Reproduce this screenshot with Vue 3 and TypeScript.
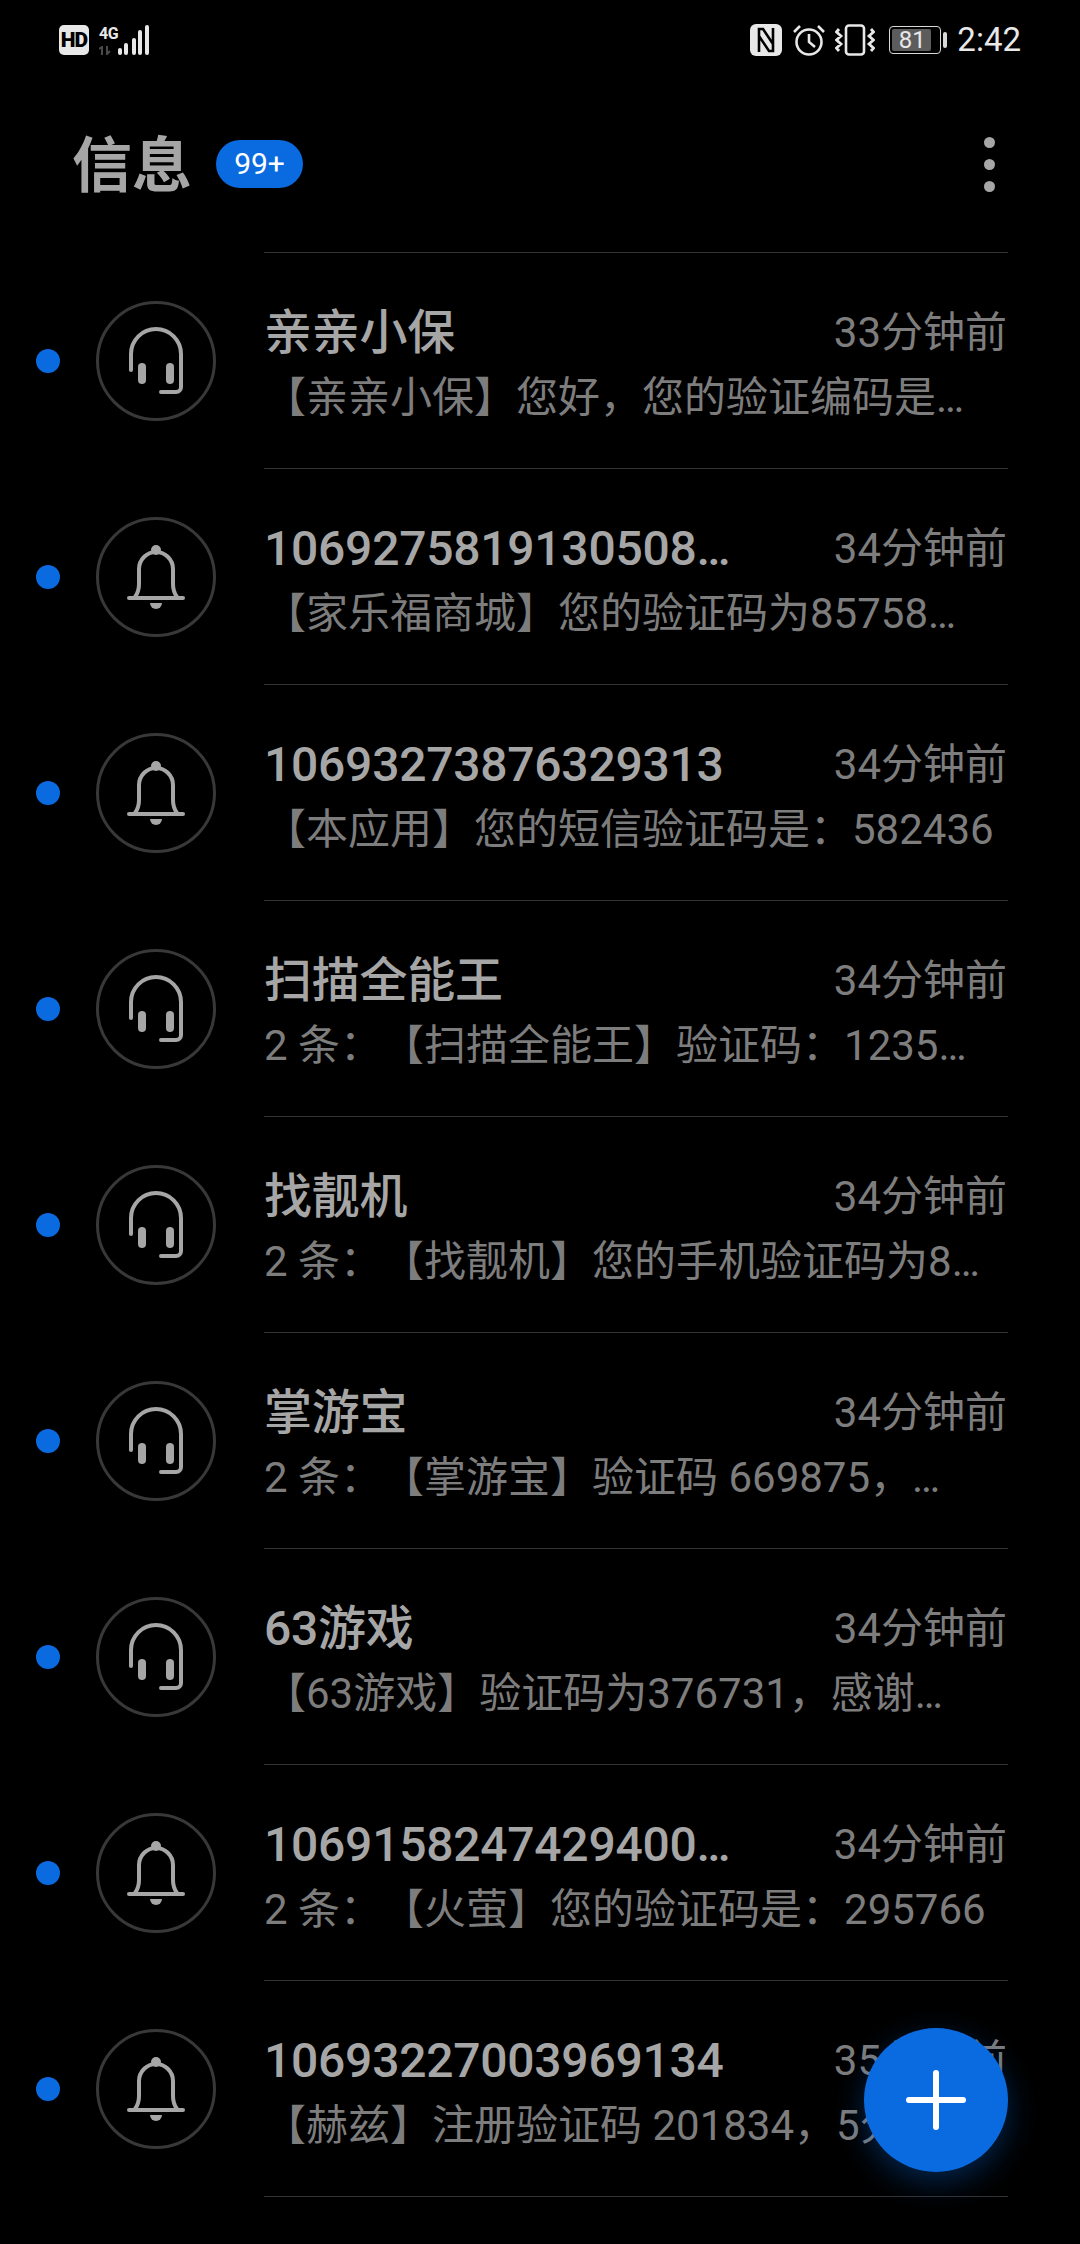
<script setup lang="ts">
type Row = { icon: 'bell' | 'head'; title: string; time: string; text: string }

const rows: Row[] = [
  { icon: 'head', title: '亲亲小保', time: '33分钟前', text: '【亲亲小保】您好，您的验证编码是…' },
  { icon: 'bell', title: '1069275819130508…', time: '34分钟前', text: '【家乐福商城】您的验证码为85758…' },
  { icon: 'bell', title: '10693273876329313', time: '34分钟前', text: '【本应用】您的短信验证码是：582436' },
  { icon: 'head', title: '扫描全能王', time: '34分钟前', text: '2 条：【扫描全能王】验证码：1235…' },
  { icon: 'head', title: '找靓机', time: '34分钟前', text: '2 条：【找靓机】您的手机验证码为8…' },
  { icon: 'head', title: '掌游宝', time: '34分钟前', text: '2 条：【掌游宝】验证码 669875，…' },
  { icon: 'head', title: '63游戏', time: '34分钟前', text: '【63游戏】验证码为376731，感谢…' },
  { icon: 'bell', title: '1069158247429400…', time: '34分钟前', text: '2 条：【火萤】您的验证码是：295766' },
  { icon: 'bell', title: '10693227003969134', time: '35分钟前', text: '【赫兹】注册验证码 201834，5分钟' },
]
</script>

<template>
  <div class="page">
    <div class="status">
      <div class="status-left">
        <span class="hd">HD</span>
        <div class="net">
          <span class="net-4g">4G</span>
          <svg class="net-arrows" width="16" height="9" viewBox="0 0 16 9">
            <path d="M3 9V1L0 3M8 0v8l3-3" fill="none" stroke="#4a4a4a" stroke-width="2" />
          </svg>
        </div>
        <svg width="32" height="32" viewBox="0 0 32 32">
          <rect x="0" y="24" width="4" height="7" rx="2" fill="#e8e8e8" />
          <rect x="6" y="19" width="4" height="12" rx="2" fill="#e8e8e8" />
          <rect x="14" y="14" width="4" height="17" rx="2" fill="#e8e8e8" />
          <rect x="20" y="6" width="4" height="25" rx="2" fill="#e8e8e8" />
          <rect x="27" y="1" width="4" height="30" rx="2" fill="#e8e8e8" />
        </svg>
      </div>
      <div class="status-right">
        <svg width="32" height="32" viewBox="0 0 32 32">
          <rect width="32" height="32" rx="6" fill="#e8e8e8" />
          <path d="M9 28V5h4l10 15M23 4v23h-4L9 12" fill="none" stroke="#000" stroke-width="2.600" />
        </svg>
        <svg class="ic-alarm" width="32" height="32" viewBox="0 0 32 32" fill="none" stroke="#e8e8e8" stroke-width="2.600">
          <circle cx="16" cy="18" r="12.500" />
          <path d="M16 10v8l6 5M1 8l6-6M31 8l-6-6" />
        </svg>
        <svg class="ic-vib" width="40" height="32" viewBox="0 0 40 32" fill="none" stroke="#e8e8e8">
          <rect x="11" y="1.500" width="18" height="29" rx="3" stroke-width="2.600" />
          <path d="M4 5 1.500 8 6 12 1.500 16 6 20 1.500 24 4 27M36 5 38.500 8 34 12 38.500 16 34 20 38.500 24 36 27" stroke-width="2.800" />
        </svg>
        <div class="battery">
          <div class="battery-body">
            <div class="battery-fill"></div>
            <span class="battery-num">81</span>
          </div>
          <span class="battery-cap"></span>
        </div>
        <span class="clock">2:42</span>
      </div>
    </div>

    <div class="header">
      <h1 class="title">信息</h1>
      <span class="badge">99+</span>
      <div class="more"><i></i><i></i><i></i></div>
    </div>

    <ul class="list">
      <li v-for="row in rows" :key="row.title" class="row">
        <span class="dot"></span>
        <div class="avatar">
          <svg v-if="row.icon === 'head'" width="56" height="68" viewBox="0 0 56 68" fill="none">
            <path d="M3 43V27a25 25 0 0 1 50 0v33a5 5 0 0 1-5 5H33" stroke="#a6a6a6" stroke-width="4" stroke-linecap="round" />
            <rect x="10" y="36" width="8" height="21" rx="4" fill="#a6a6a6" />
            <rect x="38" y="36" width="8" height="21" rx="4" fill="#a6a6a6" />
          </svg>
          <svg v-else width="58" height="68" viewBox="0 0 58 68" fill="none">
            <path d="M2 55h54M8 54c3-4 4-8 4-13V26a17 17 0 0 1 34 0v15c0 5 1 9 4 13" stroke="#a6a6a6" stroke-width="4" stroke-linecap="round" />
            <circle cx="29" cy="7" r="5" fill="#a6a6a6" />
            <path d="M23 60h12a6 6 0 0 1-12 0z" fill="#a6a6a6" />
          </svg>
        </div>
        <div class="body">
          <div class="line">
            <span class="name">{{ row.title }}</span>
            <span class="time">{{ row.time }}</span>
          </div>
          <div class="text">{{ row.text }}</div>
        </div>
      </li>
    </ul>

    <button class="fab" type="button">
      <svg width="60" height="60" viewBox="0 0 60 60">
        <path d="M30 3v54M3 30h54" stroke="#fff" stroke-width="6" stroke-linecap="round" />
      </svg>
    </button>
  </div>
</template>

<style>
html,
body {
  margin: 0;
  background: #000;
}
</style>

<style scoped>
.page {
  position: relative;
  width: 1080px;
  height: 2244px;
  overflow: hidden;
  background: #000;
  font-family: Roboto, "Noto Sans CJK SC", sans-serif;
  text-spacing-trim: space-all;
}

.status {
  display: flex;
  justify-content: space-between;
  align-items: center;
  height: 36px;
  padding: 22px 59px 0;
}

.status-left,
.status-right {
  display: flex;
  align-items: center;
}

.hd {
  width: 30px;
  height: 30px;
  border-radius: 5px;
  background: #e8e8e8;
  color: #000;
  font-size: 21px;
  font-weight: 900;
  letter-spacing: -1px;
  line-height: 30px;
  text-align: center;
}

.net {
  display: flex;
  flex-direction: column;
  margin-left: 10px;
  width: 19px;
}

.net-4g {
  color: #e8e8e8;
  font-size: 16px;
  font-weight: 700;
  letter-spacing: -0.500px;
  line-height: 16px;
}

.net-arrows {
  margin-top: 4px;
}

.ic-alarm {
  margin-left: 11px;
}

.ic-vib {
  margin-left: 10px;
}

.battery {
  display: flex;
  align-items: center;
  margin-left: 14px;
}

.battery-body {
  position: relative;
  width: 50px;
  height: 26px;
  border: 1.500px solid #d8d8d8;
  border-radius: 4px;
}

.battery-fill {
  position: absolute;
  left: 2px;
  top: 2px;
  bottom: 2px;
  width: 39px;
  background: #5c5c5c;
  border-radius: 2px;
}

.battery-num {
  position: absolute;
  left: 0;
  right: 6px;
  top: 0;
  color: #e8e8e8;
  font-size: 24px;
  line-height: 26px;
  text-align: center;
}

.battery-cap {
  width: 4px;
  height: 16px;
  margin-left: 2px;
  border-radius: 2px;
  background: #d8d8d8;
}

.clock {
  margin-left: 10px;
  color: #e8e8e8;
  font-size: 33px;
  line-height: 36px;
}

.header {
  display: flex;
  align-items: center;
  height: 120px;
  margin-top: 46px;
  padding-left: 72px;
}

.title {
  margin: 5px 0 0;
  color: #a6a6a6;
  font-size: 60px;
  font-weight: 700;
  line-height: 70px;
}

.badge {
  margin-left: 24px;
  width: 87px;
  height: 48px;
  border-radius: 24px;
  background: #0a6be0;
  color: #fff;
  font-size: 30px;
  line-height: 48px;
  text-align: center;
}

.more {
  display: flex;
  flex-direction: column;
  gap: 11px;
  margin-left: auto;
  margin-right: 85px;
}

.more i {
  display: block;
  width: 11px;
  height: 11px;
  border-radius: 50%;
  background: #a6a6a6;
}

.list {
  margin: 28px 0 0;
  padding: 0;
  list-style: none;
}

.row {
  display: flex;
  align-items: center;
  height: 216px;
  padding-left: 36px;
}

.dot {
  flex: none;
  width: 24px;
  height: 24px;
  margin-top: 2px;
  border-radius: 50%;
  background: #0a6be0;
}

.avatar {
  flex: none;
  display: flex;
  align-items: center;
  justify-content: center;
  box-sizing: border-box;
  width: 120px;
  height: 120px;
  margin: 2px 0 0 36px;
  border: 3px solid #383838;
  border-radius: 50%;
}

.body {
  box-sizing: border-box;
  width: 744px;
  height: 216px;
  margin-left: 48px;
  padding-top: 47px;
  border-top: 1px solid #333;
}

.row:last-child .body {
  height: 217px;
  border-bottom: 1px solid #333;
}

.line {
  display: flex;
  justify-content: space-between;
  align-items: flex-start;
  height: 65px;
}

.name {
  color: #a6a6a6;
  font-size: 48px;
  font-weight: 500;
  letter-spacing: -0.250px;
  line-height: 65px;
}

.time {
  margin-top: 1px;
  margin-right: 1px;
  color: #7d7d7d;
  font-size: 42px;
  line-height: 64px;
}

.text {
  color: #7d7d7d;
  font-size: 42px;
  line-height: 66px;
  white-space: nowrap;
  overflow: hidden;
}

.fab {
  position: absolute;
  left: 864px;
  top: 2028px;
  display: flex;
  align-items: center;
  justify-content: center;
  width: 144px;
  height: 144px;
  padding: 0;
  border: 0;
  border-radius: 50%;
  background: #0a6be0;
  box-shadow: 0 10px 30px rgba(10, 107, 224, 0.35);
}
</style>
